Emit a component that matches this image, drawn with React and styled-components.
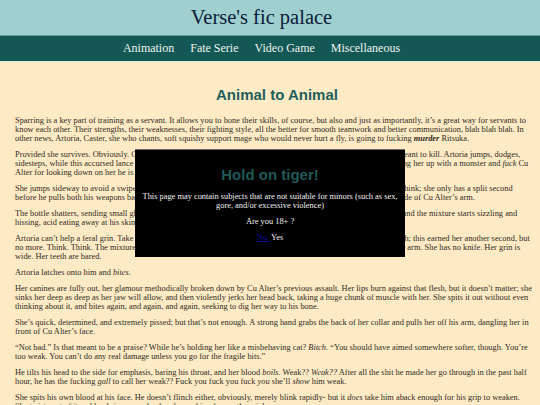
import React from "react";
import styled, { createGlobalStyle } from "styled-components";

const GlobalStyle = createGlobalStyle`
  html, body {
    margin: 0;
    padding: 0;
    background: #feebc6;
  }
  body {
    font-family: "Liberation Serif", "Times New Roman", serif;
    color: #302a22;
  }
`;

const Header = styled.header`
  background: #9fd0cf;
  height: 35px;
  display: flex;
  align-items: center;
  justify-content: center;
  padding-right: 17px;
  border-bottom: 1px solid #5f9b98;
`;

const SiteTitle = styled.h1`
  margin: 0;
  font-size: 20.5px;
  font-weight: normal;
  color: #0b1b3a;
`;

const Nav = styled.nav`
  background: #145855;
  height: 25px;
  display: flex;
  align-items: center;
  justify-content: center;
  gap: 16px;
  padding-right: 17px;
  border-bottom: 1px solid #d9e8d8;
`;

const NavLink = styled.a`
  color: #eef3ef;
  font-size: 12px;
  text-decoration: none;
`;

const Main = styled.main`
  padding: 0 8px 0 15px;
`;

const StoryTitle = styled.h2`
  margin: 24px 0 13px;
  text-align: center;
  padding-left: 7px;
  font-family: "Liberation Sans", Arial, sans-serif;
  font-size: 15px;
  font-weight: bold;
  color: #1e5e5a;
`;

const Para = styled.p`
  margin: 0 0 7px;
  font-size: 8.4px;
  line-height: 9px;
`;

const Overlay = styled.div`
  position: fixed;
  inset: 0;
  display: flex;
  align-items: center;
  justify-content: center;
`;

const Dialog = styled.div`
  width: 270px;
  height: 108px;
  box-sizing: border-box;
  background: #000;
  border-top: 1px solid #6a6a6a;
  color: #f2f2f2;
  text-align: center;
  padding: 16px 6px 0;
`;

const DialogTitle = styled.h3`
  margin: 0 0 9px;
  font-family: "Liberation Sans", Arial, sans-serif;
  font-size: 15px;
  font-weight: bold;
  color: #1e5a57;
`;

const DialogText = styled.p`
  margin: 0 0 7px;
  font-size: 8.4px;
  line-height: 9px;
`;

const Choice = styled.a`
  color: ${({ $muted }) => ($muted ? "#0a0a9a" : "#f2f2f2")};
  text-decoration: ${({ $muted }) => ($muted ? "underline" : "none")};
`;

export default function App() {
  return (
    <>
      <GlobalStyle />
      <Header>
        <SiteTitle>Verse's fic palace</SiteTitle>
      </Header>
      <Nav>
        <NavLink href="#">Animation</NavLink>
        <NavLink href="#">Fate Serie</NavLink>
        <NavLink href="#">Video Game</NavLink>
        <NavLink href="#">Miscellaneous</NavLink>
      </Nav>
      <Main>
        <StoryTitle>Animal to Animal</StoryTitle>
        <Para>
          Sparring is a key part of training as a servant. It allows you to hone their skills, of course, but also and just as
          importantly, it’s a great way for servants to know each other. Their strengths, their weaknesses, their fighting style,
          all the better for smooth teamwork and better communication, blah blah blah. In other news, Artoria, Caster, she who
          chants, soft squishy support mage who would never hurt a fly, is going to fucking <b><i>murder</i></b> Ritsuka.
        </Para>
        <Para>
          Provided she survives. Obviously. Cu Alter is out for blood tonight, and every single swing of that cursed lance is meant
          to kill. Artoria jumps, dodges, sidesteps, while this accursed lance keeps coming at her from every angle, and she swears
          Ritsuka will pay for pairing her up with a monster and <i>fuck</i> Cu Alter for looking down on her he is so going to
          regret it.
        </Para>
        <Para>
          She jumps sideway to avoid a swipe that would have taken her head clean off if it landed, no time at all to stop and
          think; she only has a split second before he pulls both his weapons back for another strike, and she takes the chance to
          smash a vial hard against the side of Cu Alter’s arm.
        </Para>
        <Para>
          The bottle shatters, sending small glass shards flying in each and every direction as the glass hits its target dead on,
          and the mixture starts sizzling and hissing, acid eating away at his skin, and Cu Alter lets out a low growl.
        </Para>
        <Para>
          Artoria can’t help a feral grin. Take that, you overgrown mutt, see how you like it. Too bad it’s still not nearly
          enough; this earned her another second, but no more. Think. Think. The mixture is working fast, already spreading from
          his wrist to cover nearly all of his entire arm. She has no knife. Her grin is wide. Her teeth are bared.
        </Para>
        <Para>
          Artoria latches onto him and <i>bites</i>.
        </Para>
        <Para>
          Her canines are fully out, her glamour methodically broken down by Cu Alter’s previous assault. Her lips burn against that
          flesh, but it doesn’t matter; she sinks her deep as deep as her jaw will allow, and then violently jerks her head back,
          taking a huge chunk of muscle with her. She spits it out without even thinking about it, and bites again, and again, and
          again, seeking to dig her way to his bone.
        </Para>
        <Para>
          She’s quick, determined, and extremely pissed; but that’s not enough. A strong hand grabs the back of her collar and pulls
          her off his arm, dangling her in front of Cu Alter’s face.
        </Para>
        <Para>
          “Not bad.” Is that meant to be a praise? While he’s holding her like a misbehaving cat? <i>Bitch</i>. “You should have
          aimed somewhere softer, though. You’re too weak. You can’t do any real damage unless you go for the fragile bits.”
        </Para>
        <Para>
          He tilts his head to the side for emphasis, baring his throat, and her blood <i>boils</i>. Weak?? <i>Weak??</i> After all
          the shit he made her go through in the past half hour, he has the fucking <i>gall</i> to call her weak?? Fuck you fuck you
          fuck <i>you</i> she’ll <i>show</i> him weak.
        </Para>
        <Para>
          She spits his own blood at his face. He doesn’t flinch either, obviously, merely blink rapidly- but it <i>does</i> take him
          aback enough for his grip to weaken. She twists out of it and lands in a crouch, already reaching for another vial.
        </Para>
      </Main>
      <Overlay>
        <Dialog>
          <DialogTitle>Hold on tiger!</DialogTitle>
          <DialogText>
            This page may contain subjects that are not suitable for minors (such as sex, gore, and/or excessive violence)
          </DialogText>
          <DialogText>Are you 18+ ?</DialogText>
          <DialogText>
            <Choice href="#" $muted>No.</Choice> <Choice href="#">Yes</Choice>
          </DialogText>
        </Dialog>
      </Overlay>
    </>
  );
}
